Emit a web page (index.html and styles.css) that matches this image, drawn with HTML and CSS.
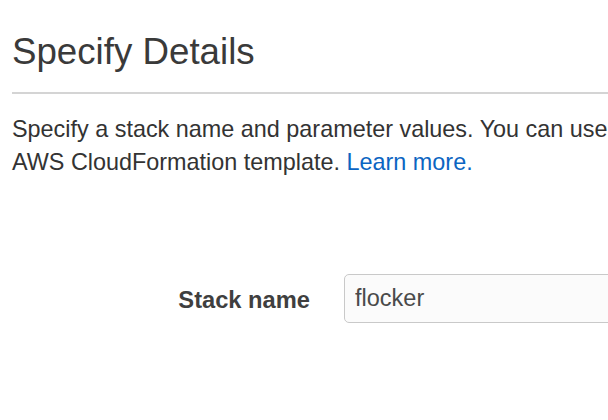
FILE: index.html
```html
<!DOCTYPE html>
<html lang="en">
<head>
<meta charset="utf-8">
<title>Specify Details</title>
<link rel="stylesheet" href="styles.css">
</head>
<body>
<main class="page">
  <h1 class="title">Specify Details</h1>
  <p class="intro">Specify a stack name and parameter values. You can use<br>AWS CloudFormation template. <a class="link" href="#">Learn more.</a></p>
  <div class="form-row">
    <label class="label" for="stack-name">Stack name</label>
    <input class="field" id="stack-name" type="text" value="flocker" readonly>
  </div>
</main>
</body>
</html>
```
FILE: styles.css
```css
html, body {
  margin: 0;
  padding: 0;
  overflow: hidden;
  background: #ffffff;
}

.page {
  width: 1400px;
  padding-left: 12px;
  font-family: "Liberation Sans", Arial, Helvetica, sans-serif;
  color: #333333;
}

.title {
  margin: 32px 0 0 0;
  padding-bottom: 20px;
  font-size: 36.7px;
  line-height: 40px;
  font-weight: normal;
  color: #3a3a3a;
  border-bottom: 2px solid #d4d4d4;
}

.intro {
  margin: 19px 0 0 0;
  font-size: 23.4px;
  line-height: 33px;
  white-space: nowrap;
  color: #333333;
}

.link {
  color: #0b65c2;
  text-decoration: none;
}

.form-row {
  margin-top: 95px;
  display: grid;
  grid-template-columns: 298px 500px;
  column-gap: 34px;
  align-items: center;
}

.label {
  text-align: right;
  font-size: 23.7px;
  font-weight: bold;
  color: #3f3f3f;
  padding-top: 3px;
}

.field {
  box-sizing: border-box;
  height: 49px;
  margin: 0;
  padding: 0 10px;
  border: 1px solid #c9c9c9;
  border-radius: 5px;
  background: #fbfbfb;
  font-family: "Liberation Sans", Arial, Helvetica, sans-serif;
  font-size: 23.5px;
  color: #4a4a4a;
  outline: none;
}
```
